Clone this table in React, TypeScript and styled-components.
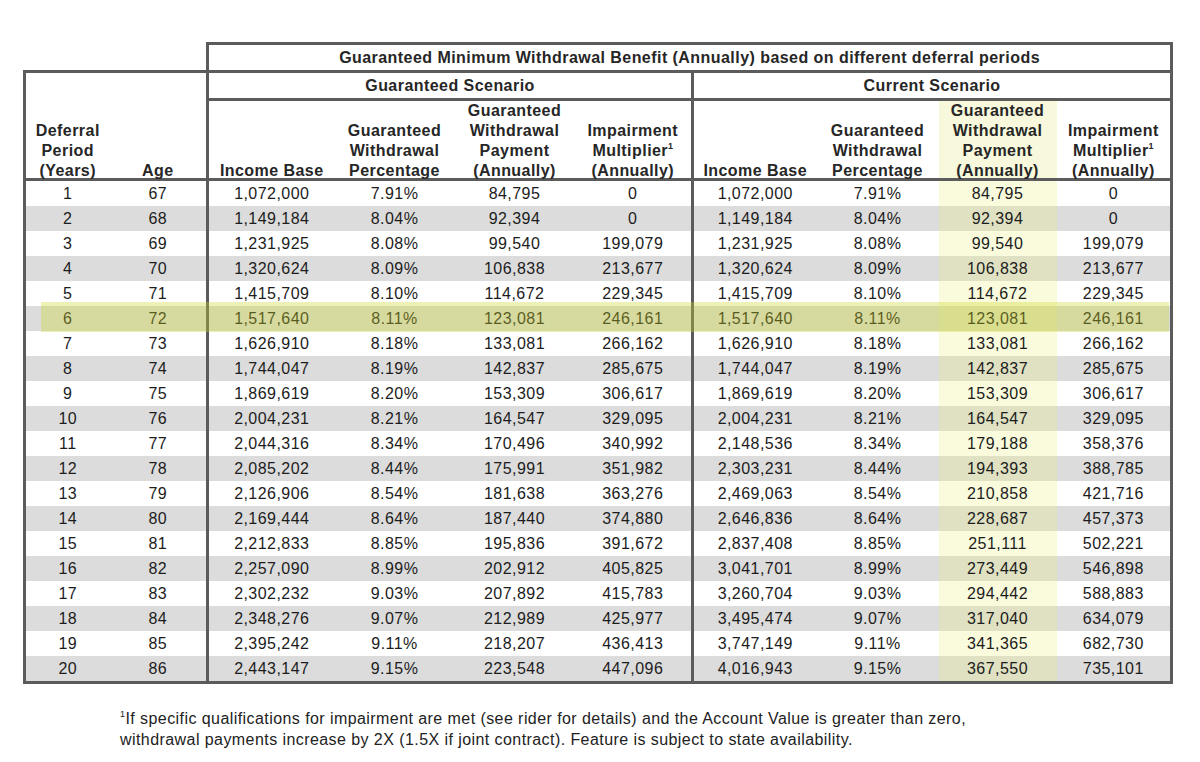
import styled, { createGlobalStyle } from "styled-components";

const GlobalStyle = createGlobalStyle`
  html, body {
    margin: 0;
    padding: 0;
    background: #ffffff;
  }
  body {
    font-family: "Liberation Sans", Arial, sans-serif;
    color: #1c1c1c;
  }
`;

const LINE = "3px solid #5b5b5b";

const Page = styled.div`
  padding: 42px 0 0 23px;
  width: 1177px;
`;

const Table = styled.table`
  border-collapse: collapse;
  table-layout: fixed;
  width: 1147px;
  font-size: 16px;
  letter-spacing: 0.45px;
`;

const Corner = styled.th`
  border: none;
  padding: 0;
`;

const BandCell = styled.th`
  border: ${LINE};
  height: 25px;
  padding: 0;
  font-weight: bold;
  font-size: 16px;
  color: #262626;
  text-align: center;
  vertical-align: middle;
`;

const ColHead = styled.th<{ $sep?: boolean; $edge?: boolean; $hl?: boolean }>`
  border-top: ${LINE};
  border-bottom: ${LINE};
  border-left: ${(p) => (p.$sep ? LINE : "none")};
  border-right: ${(p) => (p.$edge ? LINE : "none")};
  height: 76px;
  padding: 0;
  font-weight: bold;
  line-height: 20px;
  color: #262626;
  text-align: center;
  vertical-align: bottom;
  background-color: ${(p) => (p.$hl ? "#f8f9dc" : "transparent")};
  & sup {
    font-size: 9px;
    line-height: 0;
    vertical-align: 7px;
    letter-spacing: 0;
  }
`;

const HeadText = styled.div`
  margin-bottom: -3px;
`;

const Row = styled.tr<{ $shade: boolean }>`
  background-color: ${(p) => (p.$shade ? "#dcdcdc" : "#ffffff")};
  &:last-child td {
    border-bottom: ${LINE};
  }
`;

const Cell = styled.td<{ $sep?: boolean; $edge?: boolean; $hl?: boolean }>`
  height: 25px;
  padding: 0;
  text-align: center;
  vertical-align: middle;
  border-left: ${(p) => (p.$sep ? LINE : "none")};
  border-right: ${(p) => (p.$edge ? LINE : "none")};
  background-image: ${(p) =>
    p.$hl
      ? "linear-gradient(rgba(232, 240, 120, 0.26), rgba(232, 240, 120, 0.26))"
      : "none"};
`;

const MarkHost = styled(Cell)`
  position: relative;
`;

const RowMark = styled.div`
  position: absolute;
  left: 15px;
  top: -4px;
  width: 1128px;
  height: 30px;
  background: rgba(205, 215, 40, 0.34);
  pointer-events: none;
  z-index: 1;
`;

const Footnote = styled.p`
  margin: 24px 0 0 97px;
  font-size: 16px;
  line-height: 21px;
  letter-spacing: 0.43px;
  color: #222;
  & sup {
    font-size: 9px;
    line-height: 0;
    vertical-align: 7px;
  }
`;

const widths = [85, 98, 127, 120, 120, 118, 124, 122, 118, 115];

type RowData = [string, string, string, string, string, string, string, string, string, string];

const rows: RowData[] = [
  ["1", "67", "1,072,000", "7.91%", "84,795", "0", "1,072,000", "7.91%", "84,795", "0"],
  ["2", "68", "1,149,184", "8.04%", "92,394", "0", "1,149,184", "8.04%", "92,394", "0"],
  ["3", "69", "1,231,925", "8.08%", "99,540", "199,079", "1,231,925", "8.08%", "99,540", "199,079"],
  ["4", "70", "1,320,624", "8.09%", "106,838", "213,677", "1,320,624", "8.09%", "106,838", "213,677"],
  ["5", "71", "1,415,709", "8.10%", "114,672", "229,345", "1,415,709", "8.10%", "114,672", "229,345"],
  ["6", "72", "1,517,640", "8.11%", "123,081", "246,161", "1,517,640", "8.11%", "123,081", "246,161"],
  ["7", "73", "1,626,910", "8.18%", "133,081", "266,162", "1,626,910", "8.18%", "133,081", "266,162"],
  ["8", "74", "1,744,047", "8.19%", "142,837", "285,675", "1,744,047", "8.19%", "142,837", "285,675"],
  ["9", "75", "1,869,619", "8.20%", "153,309", "306,617", "1,869,619", "8.20%", "153,309", "306,617"],
  ["10", "76", "2,004,231", "8.21%", "164,547", "329,095", "2,004,231", "8.21%", "164,547", "329,095"],
  ["11", "77", "2,044,316", "8.34%", "170,496", "340,992", "2,148,536", "8.34%", "179,188", "358,376"],
  ["12", "78", "2,085,202", "8.44%", "175,991", "351,982", "2,303,231", "8.44%", "194,393", "388,785"],
  ["13", "79", "2,126,906", "8.54%", "181,638", "363,276", "2,469,063", "8.54%", "210,858", "421,716"],
  ["14", "80", "2,169,444", "8.64%", "187,440", "374,880", "2,646,836", "8.64%", "228,687", "457,373"],
  ["15", "81", "2,212,833", "8.85%", "195,836", "391,672", "2,837,408", "8.85%", "251,111", "502,221"],
  ["16", "82", "2,257,090", "8.99%", "202,912", "405,825", "3,041,701", "8.99%", "273,449", "546,898"],
  ["17", "83", "2,302,232", "9.03%", "207,892", "415,783", "3,260,704", "9.03%", "294,442", "588,883"],
  ["18", "84", "2,348,276", "9.07%", "212,989", "425,977", "3,495,474", "9.07%", "317,040", "634,079"],
  ["19", "85", "2,395,242", "9.11%", "218,207", "436,413", "3,747,149", "9.11%", "341,365", "682,730"],
  ["20", "86", "2,443,147", "9.15%", "223,548", "447,096", "4,016,943", "9.15%", "367,550", "735,101"],
];

// columns that get a thick rule on their left side
const separators = [0, 2, 6];
const lastCol = 9;
const markedCol = 8;
const markedRow = 5;

const ScenarioHeads = ({ offset }: { offset: number }) => (
  <>
    <ColHead $sep>
      <HeadText>Income Base</HeadText>
    </ColHead>
    <ColHead>
      <HeadText>
        Guaranteed
        <br />
        Withdrawal
        <br />
        Percentage
      </HeadText>
    </ColHead>
    <ColHead $hl={offset + 2 === markedCol}>
      <HeadText>
        Guaranteed
        <br />
        Withdrawal
        <br />
        Payment
        <br />
        (Annually)
      </HeadText>
    </ColHead>
    <ColHead $edge={offset + 3 === lastCol}>
      <HeadText>
        Impairment
        <br />
        Multiplier<sup>1</sup>
        <br />
        (Annually)
      </HeadText>
    </ColHead>
  </>
);

export default function App() {
  return (
    <>
      <GlobalStyle />
      <Page>
        <Table>
          <colgroup>
            {widths.map((w, i) => (
              <col key={i} style={{ width: w }} />
            ))}
          </colgroup>
          <thead>
            <tr>
              <Corner colSpan={2} />
              <BandCell colSpan={8}>
                Guaranteed Minimum Withdrawal Benefit (Annually) based on different deferral periods
              </BandCell>
            </tr>
            <tr>
              <ColHead rowSpan={2} $sep>
                <HeadText>
                  Deferral
                  <br />
                  Period
                  <br />
                  (Years)
                </HeadText>
              </ColHead>
              <ColHead rowSpan={2}>
                <HeadText>Age</HeadText>
              </ColHead>
              <BandCell colSpan={4}>Guaranteed Scenario</BandCell>
              <BandCell colSpan={4}>Current Scenario</BandCell>
            </tr>
            <tr>
              <ScenarioHeads offset={2} />
              <ScenarioHeads offset={6} />
            </tr>
          </thead>
          <tbody>
            {rows.map((r, ri) => (
              <Row key={ri} $shade={ri % 2 === 1}>
                {r.map((v, ci) => {
                  const props = {
                    $sep: separators.includes(ci),
                    $edge: ci === lastCol,
                    $hl: ci === markedCol,
                  };
                  if (ri === markedRow && ci === 0) {
                    return (
                      <MarkHost key={ci} {...props}>
                        {v}
                        <RowMark />
                      </MarkHost>
                    );
                  }
                  return (
                    <Cell key={ci} {...props}>
                      {v}
                    </Cell>
                  );
                })}
              </Row>
            ))}
          </tbody>
        </Table>
        <Footnote>
          <sup>1</sup>If specific qualifications for impairment are met (see rider for details) and the Account Value is greater than zero,
          <br />
          withdrawal payments increase by 2X (1.5X if joint contract). Feature is subject to state availability.
        </Footnote>
      </Page>
    </>
  );
}
